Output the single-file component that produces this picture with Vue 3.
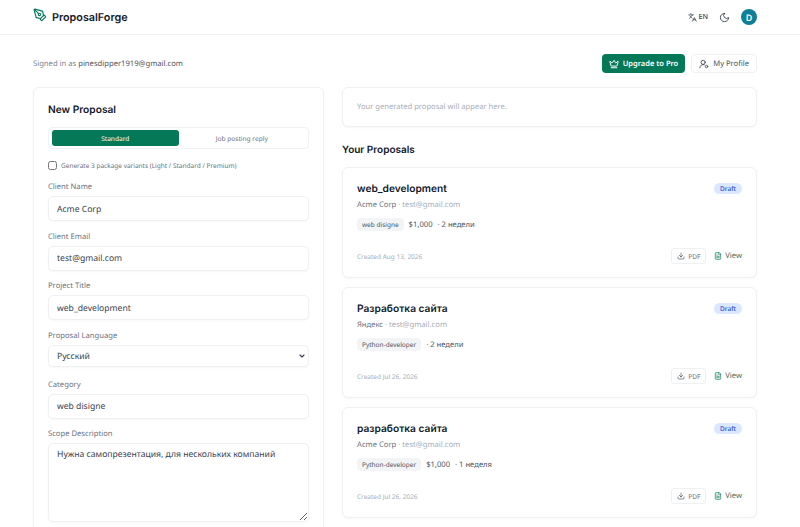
<script setup>
import { ref } from 'vue'

const proposals = ref([
  { id: 1, title: 'web_development', client: 'Acme Corp', email: 'test@gmail.com', tag: 'web disigne', price: '$1,000', time: '2 недели', created: 'Aug 13, 2026' },
  { id: 2, title: 'Разработка сайта', client: 'Яндекс', email: 'test@gmail.com', tag: 'Python-developer', price: '', time: '2 недели', created: 'Jul 26, 2026' },
  { id: 3, title: 'разработка сайта', client: 'Acme Corp', email: 'test@gmail.com', tag: 'Python-developer', price: '$1,000', time: '1 неделя', created: 'Jul 26, 2026' },
])
</script>

<template>
  <div class="page">
    <header class="topbar">
      <div class="brand">
        <svg class="logo" viewBox="0 0 24 24" fill="none" stroke="#047857" stroke-width="2" stroke-linecap="round" stroke-linejoin="round">
          <path d="M15.7 21.3a1 1 0 0 1-1.4 0l-1.6-1.6a1 1 0 0 1 0-1.4l5.6-5.6a1 1 0 0 1 1.4 0l1.6 1.6a1 1 0 0 1 0 1.4z" />
          <path d="m18 13-1.4-6.9a1 1 0 0 0-.7-.8L3.2 2 2 3.2l3.3 12.7a1 1 0 0 0 .8.7L13 18" />
          <path d="m2.3 2.3 7.3 7.3" />
          <circle cx="11" cy="11" r="2" />
        </svg>
        <span>ProposalForge</span>
      </div>
      <div class="top-actions">
        <div class="lang">
          <svg viewBox="0 0 24 24" fill="none" stroke="#374151" stroke-width="2" stroke-linecap="round" stroke-linejoin="round">
            <path d="m5 8 6 6" /><path d="m4 14 6-6 2-3" /><path d="M2 5h12" /><path d="M7 2h1" />
            <path d="m22 22-5-10-5 10" /><path d="M14 18h6" />
          </svg>
          <span>EN</span>
        </div>
        <svg class="moon" viewBox="0 0 24 24" fill="none" stroke="#374151" stroke-width="2" stroke-linecap="round" stroke-linejoin="round">
          <path d="M12 3a6 6 0 0 0 9 9 9 9 0 1 1-9-9Z" />
        </svg>
        <div class="avatar">D</div>
      </div>
    </header>

    <main class="content">
      <div class="subbar">
        <p class="signed">Signed in as <span>pinesdipper1919@gmail.com</span></p>
        <div class="subbar-actions">
          <button class="btn-upgrade">
            <svg viewBox="0 0 24 24" fill="none" stroke="#fff" stroke-width="2.4" stroke-linecap="round" stroke-linejoin="round">
              <path d="M11.6 3.3a.5.5 0 0 1 .9 0l2.9 5.6a1 1 0 0 0 1.5.3l4.3-3.7a.5.5 0 0 1 .8.5l-2.8 10.3a1 1 0 0 1-1 .7H5.8a1 1 0 0 1-1-.7L2 5.9a.5.5 0 0 1 .8-.5l4.3 3.7a1 1 0 0 0 1.5-.3z" />
              <path d="M5 21h14" />
            </svg>
            Upgrade to Pro
          </button>
          <button class="btn-profile">
            <svg viewBox="0 0 24 24" fill="none" stroke="#374151" stroke-width="2" stroke-linecap="round" stroke-linejoin="round">
              <path d="M2 21a8 8 0 0 1 10.4-7.6" /><circle cx="10" cy="8" r="5" />
              <circle cx="18" cy="18" r="3" />
            </svg>
            My Profile
          </button>
        </div>
      </div>

      <div class="columns">
        <section class="card form-card">
          <h2>New Proposal</h2>
          <div class="tabs">
            <button class="tab active">Standard</button>
            <button class="tab">Job posting reply</button>
          </div>
          <label class="check">
            <input type="checkbox" />
            <span>Generate 3 package variants (Light / Standard / Premium)</span>
          </label>
          <div class="field">
            <label>Client Name</label>
            <input type="text" value="Acme Corp" />
          </div>
          <div class="field">
            <label>Client Email</label>
            <input type="text" value="test@gmail.com" />
          </div>
          <div class="field">
            <label>Project Title</label>
            <input type="text" value="web_development" />
          </div>
          <div class="field">
            <label>Proposal Language</label>
            <div class="select-wrap">
              <select>
                <option>Русский</option>
              </select>
              <svg viewBox="0 0 24 24" fill="none" stroke="#374151" stroke-width="3.5" stroke-linecap="round" stroke-linejoin="round">
                <path d="m6 9 6 6 6-6" />
              </svg>
            </div>
          </div>
          <div class="field">
            <label>Category</label>
            <input type="text" value="web disigne" />
          </div>
          <div class="field">
            <label>Scope Description</label>
            <textarea>Нужна самопрезентация, для нескольких компаний</textarea>
          </div>
        </section>

        <div class="right">
          <section class="card placeholder">Your generated proposal will appear here.</section>
          <h2 class="list-title">Your Proposals</h2>
          <article v-for="p in proposals" :key="p.id" class="card proposal">
            <div class="proposal-head">
              <h3>{{ p.title }}</h3>
              <span class="badge">Draft</span>
            </div>
            <p class="client">{{ p.client }} <span>· {{ p.email }}</span></p>
            <div class="meta">
              <span class="tag">{{ p.tag }}</span>
              <span v-if="p.price">{{ p.price }}</span>
              <span>· {{ p.time }}</span>
            </div>
            <div class="proposal-foot">
              <span class="created">Created {{ p.created }}</span>
              <div class="foot-actions">
                <button class="btn-pdf">
                  <svg viewBox="0 0 24 24" fill="none" stroke="#4b5563" stroke-width="2" stroke-linecap="round" stroke-linejoin="round">
                    <path d="M12 15V3" /><path d="M21 15v4a2 2 0 0 1-2 2H5a2 2 0 0 1-2-2v-4" /><path d="m7 10 5 5 5-5" />
                  </svg>
                  PDF
                </button>
                <button class="btn-view">
                  <svg viewBox="0 0 24 24" fill="none" stroke="#047857" stroke-width="2" stroke-linecap="round" stroke-linejoin="round">
                    <path d="M15 2H6a2 2 0 0 0-2 2v16a2 2 0 0 0 2 2h12a2 2 0 0 0 2-2V7Z" />
                    <path d="M14 2v4a2 2 0 0 0 2 2h4" /><path d="M10 9H8" /><path d="M16 13H8" /><path d="M16 17H8" />
                  </svg>
                  View
                </button>
              </div>
            </div>
          </article>
        </div>
      </div>
    </main>
  </div>
</template>

<style>
html, body {
  margin: 0;
  overflow: hidden;
  background: #fff;
}
</style>

<style scoped>
.page {
  font-family: "Noto Sans", "Liberation Sans", sans-serif;
  color: #111827;
  height: 527px;
  overflow: hidden;
  text-rendering: geometricPrecision;
}
.topbar {
  height: 34px;
  border-bottom: 1px solid #eef0f2;
  display: flex;
  align-items: center;
  justify-content: space-between;
  padding: 0 43px 0 33px;
}
.brand {
  display: flex;
  align-items: center;
  gap: 5px;
  font-family: Inter, sans-serif;
  font-size: 10.8px;
  font-weight: 600;
}
.logo {
  width: 14px;
  height: 14px;
  margin-top: -4px;
}
.top-actions {
  display: flex;
  align-items: center;
  gap: 11px;
}
.lang {
  display: flex;
  align-items: center;
  gap: 1px;
  font-size: 7.2px;
  font-weight: 500;
  color: #374151;
}
.lang svg {
  width: 9px;
  height: 9px;
}
.moon {
  width: 11px;
  height: 11px;
}
.avatar {
  width: 16px;
  height: 16px;
  border-radius: 50%;
  background: #0e7f96;
  color: #fff;
  font-size: 9px;
  font-weight: 600;
  display: flex;
  align-items: center;
  justify-content: center;
}
.content {
  padding: 19px 43px 0 33px;
}
.subbar {
  display: flex;
  align-items: center;
  justify-content: space-between;
  margin-bottom: 14px;
}
.signed {
  margin: 0;
  font-size: 7.65px;
  color: #7b828e;
}
.signed span {
  color: #4b5563;
}
.subbar-actions {
  display: flex;
  gap: 6px;
}
button {
  font-family: inherit;
  text-rendering: inherit;
  cursor: pointer;
}
.btn-upgrade,
.btn-profile {
  height: 19px;
  border-radius: 4px;
  display: flex;
  align-items: center;
  gap: 4px;
  font-size: 7.5px;
  font-weight: 600;
  padding: 0 7px;
}
.btn-upgrade svg,
.btn-profile svg {
  width: 10px;
  height: 10px;
}
.btn-upgrade {
  background: #047857;
  border: 0;
  color: #fff;
}
.btn-profile {
  background: #fff;
  border: 1px solid #eef0f2;
  color: #4b5563;
  font-size: 7.6px;
  font-weight: 400;
}
.columns {
  display: grid;
  grid-template-columns: 291px 415px;
  gap: 18px;
  align-items: start;
}
.card {
  background: #fff;
  border: 1px solid #eef0f2;
  border-radius: 6px;
  box-shadow: 0 1px 2px rgba(0, 0, 0, 0.03);
}
.form-card {
  padding: 15px 14px 20px;
}
.form-card h2 {
  margin: 0 0 10px;
  font-family: Inter, sans-serif;
  font-size: 10.2px;
  font-weight: 600;
  line-height: 14px;
}
.tabs {
  display: grid;
  grid-template-columns: 1fr 1fr;
  height: 22px;
  box-sizing: border-box;
  padding: 2px 3px;
  border: 1px solid #f1f2f4;
  border-radius: 4px;
  margin-bottom: 11px;
}
.tab {
  border: 0;
  background: transparent;
  color: #6b7280;
  font-size: 6.6px;
  border-radius: 3px;
  padding: 0;
}
.tab.active {
  background: #047857;
  color: #fff;
}
.check {
  display: flex;
  align-items: center;
  gap: 4px;
  font-size: 6.5px;
  color: #6b7280;
  margin-bottom: 12px;
  height: 10px;
}
.check input {
  margin: 0;
  width: 9px;
  height: 9px;
}
.field {
  margin-bottom: 10.5px;
}
.field label {
  display: block;
  font-size: 7.65px;
  color: #6b7280;
  line-height: 11px;
  margin-bottom: 3px;
}
.field input,
.field select,
.field textarea {
  display: block;
  width: 100%;
  box-sizing: border-box;
  height: 25px;
  border: 1px solid #eef0f2;
  border-radius: 5px;
  background: #fff;
  font-family: inherit;
  text-rendering: inherit;
  font-size: 8.6px;
  color: #374151;
  padding: 0 8px;
  outline: none;
  box-shadow: 0 1px 2px rgba(0, 0, 0, 0.03);
}
.select-wrap {
  position: relative;
  margin-bottom: 13px;
}
.select-wrap svg {
  position: absolute;
  right: 3px;
  top: 7px;
  width: 8px;
  height: 8px;
  pointer-events: none;
}
.field select {
  height: 22px;
  appearance: none;
}
.field textarea {
  height: 79px;
  padding: 4px 8px;
  line-height: 13px;
}
.placeholder {
  height: 40px;
  box-sizing: border-box;
  display: flex;
  align-items: center;
  padding: 0 14px;
  font-size: 7.6px;
  color: #a8aeb9;
}
.list-title {
  margin: 16px 0 10px;
  font-family: Inter, sans-serif;
  font-size: 10px;
  font-weight: 600;
  line-height: 14px;
}
.proposal {
  height: 111px;
  box-sizing: border-box;
  padding: 14px 14px 13px;
  margin-bottom: 9px;
  display: flex;
  flex-direction: column;
}
.proposal-head {
  display: flex;
  justify-content: space-between;
  align-items: center;
}
.proposal-head h3 {
  margin: 0;
  font-family: Inter, sans-serif;
  font-size: 10.2px;
  font-weight: 600;
  line-height: 14px;
}
.badge {
  background: #dbe7fd;
  color: #1d4ed8;
  font-size: 6.5px;
  font-weight: 500;
  padding: 1px 6px;
  border-radius: 8px;
  margin-top: -2px;
}
.client {
  margin: 3px 0 7px;
  font-size: 7.65px;
  color: #6b7280;
  line-height: 12px;
}
.client span {
  color: #a8aeb9;
}
.meta {
  display: flex;
  align-items: center;
  gap: 5px;
  font-size: 7.65px;
  color: #4b5563;
}
.tag {
  background: #f3f4f6;
  font-size: 6.5px;
  padding: 2px 5px;
  border-radius: 4px;
}
.proposal-foot {
  margin-top: auto;
  display: flex;
  align-items: center;
  justify-content: space-between;
}
.created {
  font-size: 6.5px;
  color: #a8aeb9;
}
.foot-actions {
  display: flex;
  align-items: center;
  gap: 8px;
}
.btn-pdf,
.btn-view {
  display: flex;
  align-items: center;
  gap: 3px;
  height: 16px;
  background: #fff;
  padding: 0 5px;
}
.btn-pdf svg,
.btn-view svg {
  width: 8px;
  height: 8px;
}
.btn-pdf {
  border: 1px solid #eef0f2;
  border-radius: 3px;
  color: #6b7280;
  font-size: 6.5px;
}
.btn-view {
  border: 0;
  color: #4b6b60;
  font-size: 7.65px;
  padding: 0;
}
</style>
